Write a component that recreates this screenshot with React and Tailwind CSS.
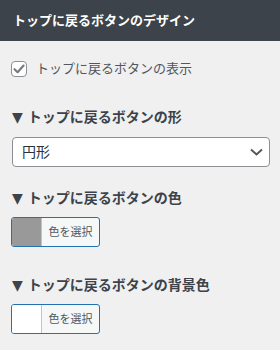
import React from "react";

const font = { fontFamily: '"Liberation Sans", "Noto Sans CJK JP", sans-serif' };

function Heading({ children, className = "" }) {
  return (
    <div className={`ml-[1px] h-[20px] leading-[20px] text-[14px] font-bold text-[#3c434a] whitespace-nowrap ${className}`}>
      <span style={{ fontFamily: '"DejaVu Sans", sans-serif' }} className="text-[14px]">▼ </span>
      {children}
    </div>
  );
}

function ColorButton({ color, className = "" }) {
  return (
    <div className={`flex w-[89px] h-[30px] border border-[#2271b1] rounded-[3px] overflow-hidden bg-[#f6f7f7] ${className}`}>
      <div className="w-[30px] h-full border-r border-[#c3c4c7]" style={{ background: color }} />
      <div className="flex-1 flex items-center justify-center text-[11px] text-[#50575e]">色を選択</div>
    </div>
  );
}

export default function App() {
  return (
    <div className="w-[280px] h-[350px] bg-[#f0f0f0] overflow-hidden" style={font}>
      <div className="h-[41px] bg-[#3c434a] flex items-center px-[13px]">
        <span className="text-white font-bold text-[13px] whitespace-nowrap">トップに戻るボタンのデザイン</span>
      </div>
      <div className="pt-[20px] pl-[11px]">
        <div className="flex items-center h-[16px] gap-[9px]">
          <div className="w-[16px] h-[16px] border border-[#8c8f94] rounded-[4px] bg-white flex items-center justify-center">
            <svg width="14" height="14" viewBox="0 0 14 14">
              <path d="M2.5 7.2 L5.6 10.2 L11.6 3.6" fill="none" stroke="#787c82" strokeWidth="2.2" strokeLinecap="round" strokeLinejoin="round" />
            </svg>
          </div>
          <span className="text-[13px] text-[#50575e] whitespace-nowrap">トップに戻るボタンの表示</span>
        </div>

        <Heading className="mt-[30px]">トップに戻るボタンの形</Heading>
        <div className="mt-[10px] ml-[1px] w-[258px] h-[30px] border border-[#8c8f94] rounded-[4px] bg-white flex items-center justify-between pl-[9px] pr-[6px]">
          <span className="text-[14px] text-[#2c3338]">円形</span>
          <svg width="13" height="8" viewBox="0 0 13 8">
            <path d="M1 1.5 L6.5 6.5 L12 1.5" fill="none" stroke="#50575e" strokeWidth="2" />
          </svg>
        </div>

        <Heading className="mt-[21px]">トップに戻るボタンの色</Heading>
        <ColorButton color="#999999" className="mt-[9px]" />

        <Heading className="mt-[28px]">トップに戻るボタンの背景色</Heading>
        <ColorButton color="#ffffff" className="mt-[9px]" />
      </div>
    </div>
  );
}
